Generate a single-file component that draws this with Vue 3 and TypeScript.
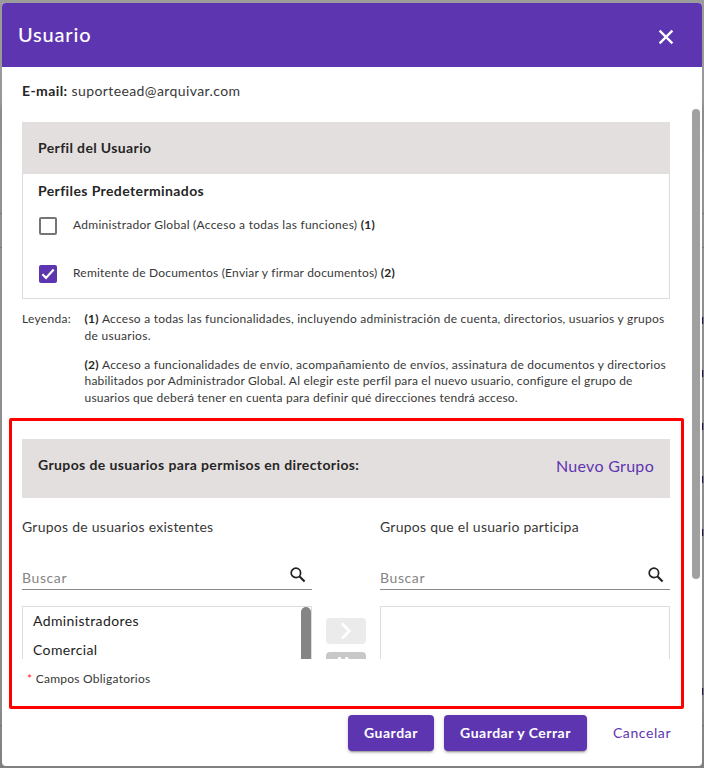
<script setup lang="ts">
interface Profile {
  id: number
  label: string
  checked: boolean
}

interface LegendNote {
  id: number
  lines: string[]
}

const profiles: Profile[] = [
  { id: 1, label: 'Administrador Global (Acceso a todas las funciones)', checked: false },
  { id: 2, label: 'Remitente de Documentos (Enviar y firmar documentos)', checked: true },
]

const notes: LegendNote[] = [
  {
    id: 1,
    lines: [
      'Acceso a todas las funcionalidades, incluyendo administración de cuenta, directorios, usuarios y grupos',
      'de usuarios.',
    ],
  },
  {
    id: 2,
    lines: [
      'Acceso a funcionalidades de envío, acompañamiento de envíos, assinatura de documentos y directorios',
      'habilitados por Administrador Global. Al elegir este perfil para el nuevo usuario, configure el grupo de',
      'usuarios que deberá tener en cuenta para definir qué direcciones tendrá acceso.',
    ],
  },
]

const existingGroups: string[] = ['Administradores', 'Comercial']
const ticks: number[] = [317, 370, 423, 476, 529, 688]
const rules: number[] = [213, 247, 725]
</script>

<template>
  <div class="backdrop">
    <i v-for="y in rules" :key="'r' + y" class="rule" :style="{ top: y + 'px' }"></i>
    <i v-for="y in ticks" :key="'t' + y" class="tick" :style="{ top: y + 'px' }"></i>

    <section class="dialog">
      <header class="head">
        <h1>Usuario</h1>
        <svg class="close" viewBox="0 0 16 16"><path d="M1.6 1.6 14.4 14.4M14.4 1.6 1.6 14.4" /></svg>
      </header>

      <div class="body">
        <p class="email"><b>E-mail:</b> <span>suporteead@arquivar.com</span></p>

        <div class="panel-head">Perfil del Usuario</div>
        <div class="panel">
          <h2>Perfiles Predeterminados</h2>
          <div v-for="p in profiles" :key="p.id" class="profile">
            <span class="box" :class="{ on: p.checked }">
              <svg v-if="p.checked" viewBox="0 0 18 18"><path d="M3.4 9.3 7 12.9 14.7 4.6" /></svg>
            </span>
            <span class="profile-label" :class="'p' + p.id">{{ p.label }} <b>({{ p.id }})</b></span>
          </div>
        </div>

        <div class="legend">
          <span class="legend-title">Leyenda:</span>
          <div class="notes">
            <p v-for="n in notes" :key="n.id">
              <span v-for="(line, i) in n.lines" :key="i" class="line" :class="'n' + n.id + i"><b v-if="i === 0">({{ n.id }}) </b>{{ line }}</span>
            </p>
          </div>
        </div>

        <div class="groups-head">
          <span>Grupos de usuarios para permisos en directorios:</span>
          <a>Nuevo Grupo</a>
        </div>

        <div class="groups">
          <div class="column">
            <h3>Grupos de usuarios existentes</h3>
            <div class="search">
              <span>Buscar</span>
              <svg viewBox="0 0 16 16"><circle cx="5.9" cy="5.9" r="4.7" /><path d="M9.3 9.3 14.6 14.6" /></svg>
            </div>
            <div class="list">
              <ul>
                <li v-for="g in existingGroups" :key="g">{{ g }}</li>
              </ul>
              <i class="list-bar"></i>
            </div>
          </div>
          <div class="arrows">
            <span class="arrow"><svg viewBox="0 0 40 26"><path d="M16.7 6.3 23.3 13 16.7 19.7" /></svg></span>
            <span class="arrow dark"><svg viewBox="0 0 40 26"><path d="M13.3 6.3 20 13 13.3 19.7M20.5 6.3 27.2 13 20.5 19.7" /></svg></span>
          </div>
          <div class="column">
            <h3>Grupos que el usuario participa</h3>
            <div class="search">
              <span>Buscar</span>
              <svg viewBox="0 0 16 16"><circle cx="5.9" cy="5.9" r="4.7" /><path d="M9.3 9.3 14.6 14.6" /></svg>
            </div>
            <div class="list"></div>
          </div>
        </div>
      </div>

      <p class="required"><em>*</em> Campos Obligatorios</p>
      <footer class="actions">
        <button class="primary save">Guardar</button>
        <button class="primary save-close">Guardar y Cerrar</button>
        <button class="link">Cancelar</button>
      </footer>

      <i class="scrollbar"></i>
    </section>

    <div class="highlight"></div>
  </div>
</template>

<style>
body {
  overflow: hidden;
}
</style>

<style scoped>
* {
  box-sizing: border-box;
}
h1, h2, h3, p, ul {
  margin: 0;
  padding: 0;
}
.backdrop {
  position: relative;
  width: 704px;
  height: 768px;
  padding: 3px 2px 2px;
  overflow: hidden;
  background: linear-gradient(#9c9c9c 0, #989898 100px, #8c8c8c 112px, #929292 160px, #8b8b8b 700px, #808080 768px);
  font-family: Lato, "Liberation Sans", sans-serif;
  font-size: 14px;
  color: #383838;
  white-space: nowrap;
}
b, h2 {
  color: #262626;
}
.rule {
  position: absolute;
  left: 0;
  width: 704px;
  height: 1px;
  background: #777;
}
.tick {
  position: absolute;
  left: 702px;
  width: 2px;
  height: 7px;
  border-left: 1px solid #3d1238;
  background: #66768c;
}
.dialog {
  position: relative;
  height: 763px;
  border-radius: 4px;
  overflow: hidden;
  background: #fff;
}
.head {
  display: flex;
  align-items: center;
  justify-content: space-between;
  height: 64px;
  padding: 0 28px 0 16px;
  background: #5e35b1;
  color: #fff;
}
h1 {
  margin-top: -2px;
  font-size: 20px;
  font-weight: 500;
  line-height: 24px;
  letter-spacing: 0.8px;
}
.close {
  width: 16px;
  height: 16px;
  margin-top: 4px;
}
.close path {
  fill: none;
  stroke: #fff;
  stroke-width: 2.3;
}
.body {
  height: 592px;
  padding: 14px 32px 0 20px;
  overflow: hidden;
}
.email {
  height: 41px;
  line-height: 20px;
  letter-spacing: 0.4px;
}
.panel-head {
  height: 52px;
  padding-left: 16px;
  background: #e4dfdf;
  color: #262626;
  font-weight: 700;
  line-height: 52px;
  letter-spacing: 0.37px;
}
.panel {
  height: 125px;
  padding: 7px 15px 0;
  border: 1px solid #dcdcdc;
  border-top: 0;
}
h2 {
  height: 20px;
  font-size: 14px;
  line-height: 20px;
  letter-spacing: 0.39px;
}
.profile {
  display: flex;
  align-items: flex-start;
  height: 48px;
  padding: 16px 0 0 1px;
}
.box {
  width: 18px;
  height: 18px;
  border: 2px solid #757575;
  border-radius: 2px;
}
.box.on {
  border: 0;
  background: #5e35b1;
}
.box svg {
  display: block;
  width: 18px;
  height: 18px;
}
.box path {
  fill: none;
  stroke: #fff;
  stroke-width: 2.2;
}
.profile-label {
  margin: -1px 0 0 16px;
  font-size: 12px;
  line-height: 18px;
}
.p1 {
  letter-spacing: 0.27px;
}
.p2 {
  letter-spacing: 0.21px;
}
.legend {
  display: flex;
  height: 140px;
  padding-top: 12px;
  font-size: 12px;
  line-height: 16.6px;
  letter-spacing: 0.3px;
}
.legend-title {
  flex: none;
  width: 62.5px;
}
.notes p {
  margin-bottom: 12.6px;
}
.line {
  display: block;
}
.n10 {
  letter-spacing: 0.235px;
}
.n20 {
  letter-spacing: 0.24px;
}
.n21,
.n22 {
  letter-spacing: 0.188px;
}
.line b {
  white-space: pre;
}
.groups-head {
  display: flex;
  justify-content: space-between;
  height: 59px;
  padding: 0 16px;
  background: #e4dfdf;
  color: #262626;
  line-height: 52px;
  font-weight: 700;
  letter-spacing: 0.39px;
}
.groups-head a {
  color: #5e35b1;
  font-size: 16px;
  font-weight: 400;
  line-height: 54px;
  letter-spacing: 0.3px;
}
.groups {
  display: flex;
  gap: 14px;
}
.column {
  width: 290px;
}
h3 {
  height: 62px;
  padding-top: 19px;
  font-size: 14px;
  font-weight: 400;
  line-height: 20px;
  letter-spacing: 0.25px;
}
.search {
  display: flex;
  justify-content: space-between;
  height: 30px;
  padding: 7px 6px 0 0;
  border-bottom: 1px solid #8a8a8a;
  color: #858585;
  line-height: 22px;
  letter-spacing: 0.6px;
}
.search svg {
  width: 16px;
  height: 16px;
}
.search circle,
.search path {
  fill: none;
  stroke: #222;
  stroke-width: 1.7;
}
.search path {
  stroke-width: 2.1;
}
.list {
  display: flex;
  justify-content: space-between;
  height: 150px;
  margin-top: 16px;
  border: 1px solid #dcdcdc;
}
ul {
  margin-top: -1px;
  padding-left: 10px;
  list-style: none;
  color: #1c1c1c;
  line-height: 29px;
  letter-spacing: 0.37px;
}
.list-bar {
  width: 10px;
  border-radius: 5px;
  background: #858585;
}
.arrows {
  display: flex;
  flex-direction: column;
  gap: 8px;
  width: 40px;
  padding-top: 120px;
}
.arrow {
  height: 26px;
  border-radius: 4px;
  background: #ebebeb;
}
.arrow.dark {
  background: #c8c8c8;
}
.arrow svg {
  display: block;
}
.arrow path {
  fill: none;
  stroke: #fff;
  stroke-width: 2.8;
  stroke-linecap: round;
}
.required {
  height: 56px;
  padding: 10px 0 0 25px;
  font-size: 12px;
  line-height: 20px;
  letter-spacing: 0.25px;
}
.required em {
  color: #f22;
  font-style: normal;
}
.actions {
  display: flex;
  justify-content: flex-end;
  gap: 10px;
  padding-right: 15px;
}
button {
  height: 36px;
  padding: 0;
  border: 0;
  border-radius: 4px;
  font-family: inherit;
  font-size: 14px;
  line-height: 36px;
}
.primary {
  background: #5e35b1;
  color: #fff;
  font-weight: 700;
  letter-spacing: 0.5px;
  box-shadow: 0 3px 1px -2px rgba(0, 0, 0, 0.2), 0 2px 2px rgba(0, 0, 0, 0.14), 0 1px 5px rgba(0, 0, 0, 0.12);
}
.save {
  width: 86px;
}
.save-close {
  width: 143px;
}
.link {
  width: 90px;
  background: none;
  color: #5e35b1;
  letter-spacing: 0.6px;
}
.scrollbar {
  position: absolute;
  top: 106px;
  left: 690px;
  width: 8px;
  height: 470px;
  border-radius: 4px;
  background: #a0a0a0;
}
.highlight {
  position: absolute;
  top: 418px;
  left: 9px;
  width: 675px;
  height: 291px;
  border: 3px solid #f00;
  border-radius: 2px;
}
</style>
